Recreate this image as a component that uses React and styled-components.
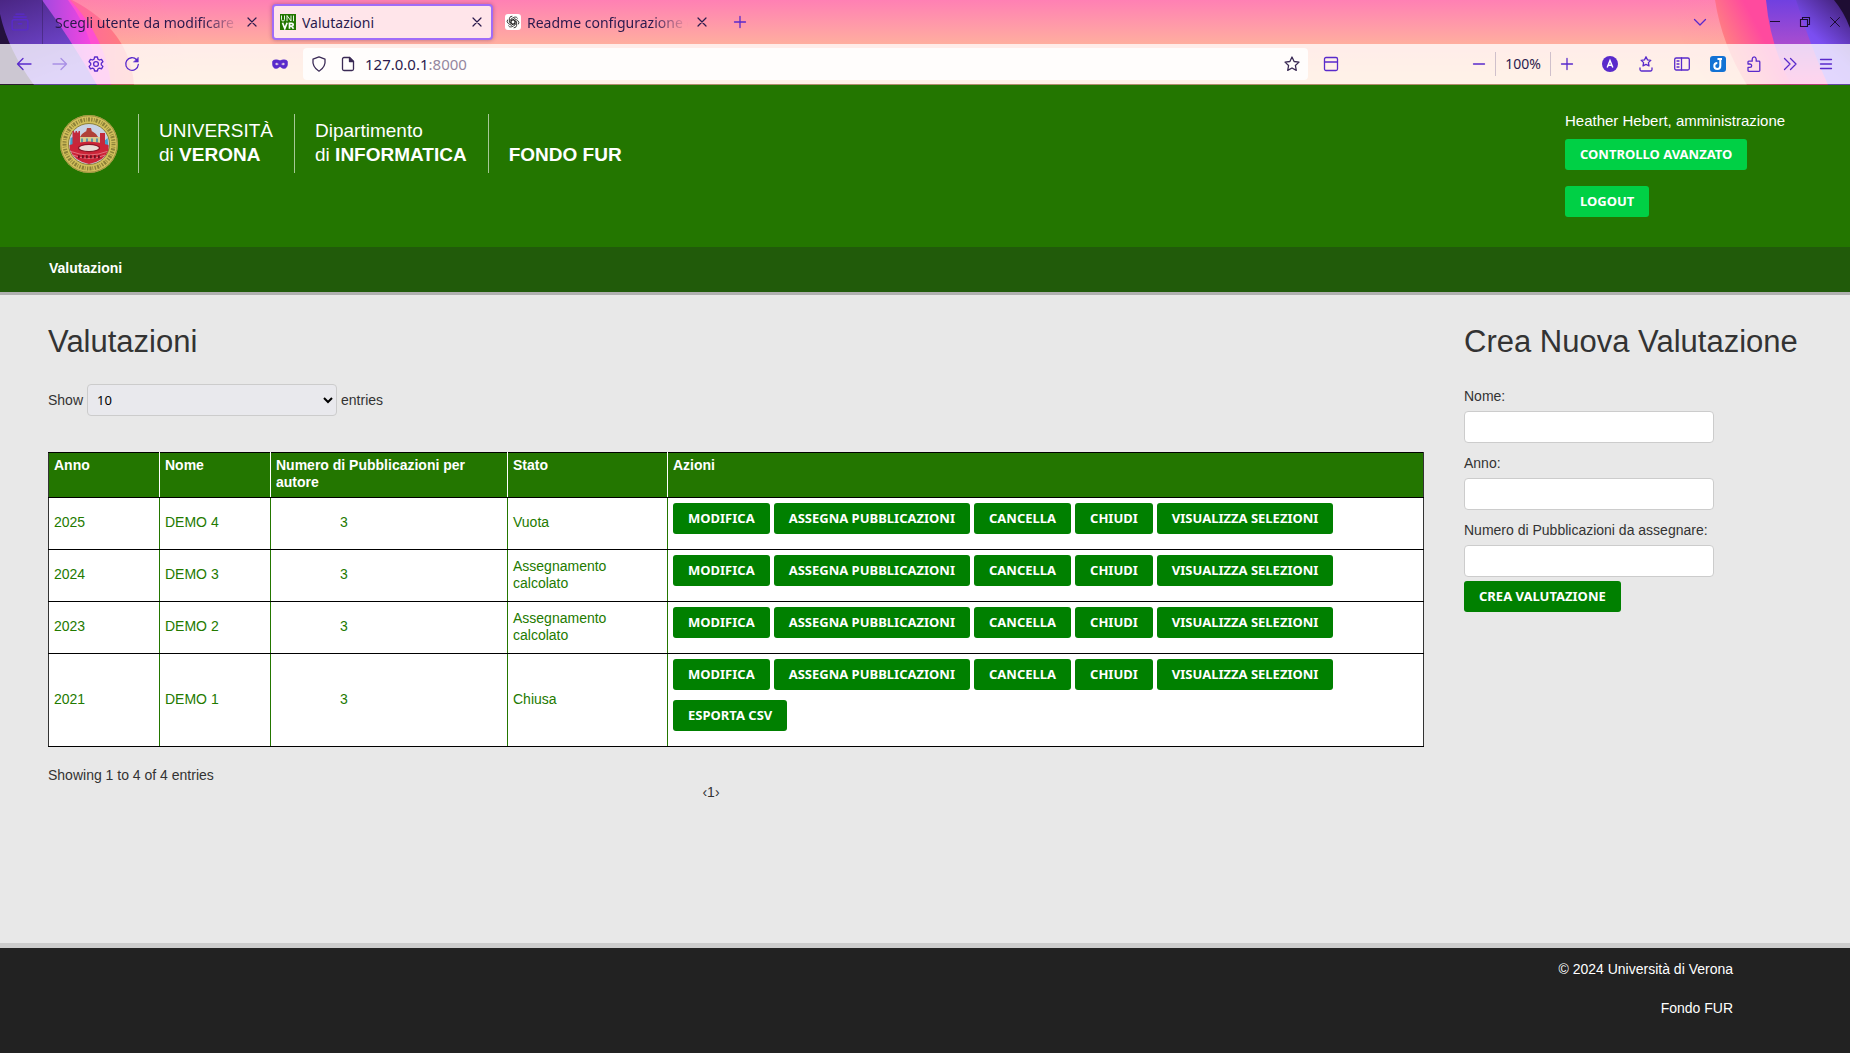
import React from "react";
import styled, { createGlobalStyle } from "styled-components";

const GlobalStyle = createGlobalStyle`
  *, *::before, *::after { box-sizing: border-box; }
  body {
    margin: 0;
    background: #e8e8e8;
    color: #333;
    font: 14px/20px "Liberation Sans", Arial, sans-serif;
  }
`;

const UI_FONT = '"Noto Sans", "Open Sans", sans-serif';

const Page = styled.div`
  display: flex;
  flex-direction: column;
  min-height: 100vh;
`;

/* ---------- browser chrome ---------- */

const Chrome = styled.div`
  position: relative;
  isolation: isolate;
  height: 85px;
  background: linear-gradient(#ff80b4 0, #ffae9f 44px, #ffc89a 85px);
  font-family: ${UI_FONT};
  color: #2b1a4d;
`;

const Artwork = styled.svg`
  position: absolute;
  top: 0;
  ${(p) => (p.$side === "left" ? "left: 0;" : "right: 0;")}
  z-index: -1;
  width: 240px;
  height: 85px;
`;

const TabBar = styled.div`
  display: flex;
  align-items: center;
  height: 44px;
`;

const ToolBar = styled.div`
  display: flex;
  align-items: center;
  height: 40px;
  padding: 0 6px;
  background: rgba(255, 255, 255, 0.77);
`;

const ToolBarEdge = styled.div`
  height: 1px;
  background: rgba(60, 50, 40, 0.4);
`;

const IconButton = styled.button`
  display: flex;
  flex: none;
  align-items: center;
  justify-content: center;
  width: ${(p) => p.$width || 36}px;
  height: 32px;
  padding: 0;
  border: 0;
  background: none;
  color: ${(p) => p.$color || "#592acb"};
  opacity: ${(p) => (p.disabled ? 0.4 : 1)};
`;

const FirefoxView = styled.div`
  display: flex;
  align-items: center;
  align-self: stretch;
  padding: 0 4px 0 2px;
  border-right: 1px solid rgba(43, 26, 77, 0.4);
`;

const Tab = styled.div`
  display: flex;
  align-items: center;
  width: ${(p) => (p.$wide ? 229 : 221)}px;
  height: 36px;
  padding: ${(p) => (p.$wide ? "0 6px 0 10px" : "0 0 0 6px")};
  border: 2px solid ${(p) => (p.$active ? "#a06cf8" : "transparent")};
  border-radius: 4px;
  background: ${(p) => (p.$active ? "#ffe5ea" : "transparent")};
  box-shadow: ${(p) => (p.$active ? "0 0 4px rgba(80, 20, 80, 0.4)" : "none")};
`;

const TabTitle = styled.span`
  flex: 1;
  margin-left: ${(p) => (p.$icon ? 6 : 0)}px;
  padding-top: 2px;
  overflow: hidden;
  white-space: nowrap;
  font-size: 14px;
  ${(p) => p.$fade && "mask-image: linear-gradient(to left, transparent 0, #000 36px);"}
`;

const Favicon = styled.svg`
  flex: none;
  width: 16px;
  height: 16px;
`;

const Spacer = styled.div`
  flex: ${(p) => (p.$width ? "none" : 1)};
  width: ${(p) => (p.$width ? `${p.$width}px` : "auto")};
`;

const AddressBar = styled.div`
  display: flex;
  flex: 1;
  align-items: center;
  height: 32px;
  border-radius: 4px;
  background: rgba(255, 255, 255, 0.85);
`;

const Address = styled.input`
  field-sizing: content;
  margin-left: 5px;
  padding: 0;
  border: 0;
  outline: 0;
  background: none;
  color: #2b1a4d;
  font: 15px/20px ${UI_FONT};
`;

const Port = styled.span`
  flex: 1;
  color: #94869f;
  font-size: 15px;
`;

const ZoomLevel = styled.span`
  padding: 2px 9px;
  border: solid #cfc0cb;
  border-width: 0 1px;
  font-size: 14px;
`;

const Glyph = ({ size = 16, w = 1.3, children, ...rest }) => (
  <svg width={size} height={size} viewBox="0 0 16 16" fill="none" stroke="currentColor"
    strokeWidth={w} strokeLinecap="round" strokeLinejoin="round" aria-hidden="true" {...rest}>
    {children}
  </svg>
);

const CloseGlyph = () => (
  <Glyph w={1.2}><path d="M4 4l8 8M12 4l-8 8" /></Glyph>
);

function LeftArtwork() {
  return (
    <Artwork $side="left" viewBox="0 0 240 85" aria-hidden="true">
      <defs>
        <linearGradient id="la" x1="0" x2="1"><stop offset="0" stopColor="#ff9a6c" /><stop offset="1" stopColor="#ff8aa4" stopOpacity="0" /></linearGradient>
        <linearGradient id="lb" x1="0" x2="1"><stop offset="0" stopColor="#ff45d5" /><stop offset="1" stopColor="#ff8078" /></linearGradient>
        <linearGradient id="lc" x1="0.2" x2="1"><stop offset="0" stopColor="#7a4be0" /><stop offset="1" stopColor="#ff45e0" /></linearGradient>
        <linearGradient id="ld" x1="0" x2="0.4" y2="1"><stop offset="0" stopColor="#4a2684" /><stop offset="1" stopColor="#7c50e6" /></linearGradient>
      </defs>
      <path d="M0 0H160Q185 40 190 85H0Z" fill="url(#la)" opacity="0.35" />
      <path d="M0 0H72Q130 30 134 85H0Z" fill="url(#lb)" />
      <path d="M0 0H70Q106 38 111 85H0Z" fill="#ff4fd0" />
      <path d="M0 0H68Q98 40 96 85H0Z" fill="url(#lc)" />
      <path d="M0 0H42Q70 38 97 85H0Z" fill="url(#ld)" />
      <path d="M0 14Q8 50 34 85H0Z" fill="#24113c" />
    </Artwork>
  );
}

function RightArtwork() {
  return (
    <Artwork $side="right" viewBox="0 0 240 85" aria-hidden="true">
      <defs>
        <linearGradient id="ra" x1="0" x2="1"><stop offset="0" stopColor="#ff8aa4" stopOpacity="0" /><stop offset="1" stopColor="#ff8a90" /></linearGradient>
        <linearGradient id="rb" gradientUnits="userSpaceOnUse" x1="106" y1="40" x2="144" y2="20"><stop offset="0" stopColor="#ff8a7c" /><stop offset="1" stopColor="#ff4a9e" /></linearGradient>
        <linearGradient id="rc" x1="0" x2="0" y2="1"><stop offset="0" stopColor="#7040e0" /><stop offset="0.5" stopColor="#a64cd0" /><stop offset="1" stopColor="#ff48b0" /></linearGradient>
        <linearGradient id="rd" x1="1" x2="0.4" y2="1"><stop offset="0" stopColor="#3a1a68" /><stop offset="0.6" stopColor="#7a4ef0" /><stop offset="1" stopColor="#8858ff" /></linearGradient>
      </defs>
      <path d="M60 0H240V85H100Q70 50 60 0Z" fill="url(#ra)" opacity="0.4" />
      <path d="M105 0H240V85H137Q112 45 105 0Z" fill="url(#rb)" />
      <path d="M156 0H240V85H181Q160 45 156 0Z" fill="url(#rc)" />
      <path d="M186 0H240V85H218Q200 45 186 0Z" fill="url(#rd)" />
      <path d="M224 0H240V28Q234 12 224 0Z" fill="#1e0d33" />
    </Artwork>
  );
}

function BrowserChrome() {
  return (
    <Chrome>
      <LeftArtwork />
      <RightArtwork />
      <TabBar>
        <FirefoxView>
          <IconButton aria-label="Firefox View">
            <Glyph size={18}><rect x="1" y="6" width="14" height="9" rx="1.5" /><path d="M2.500 3.500h11M4.500 1h7M6.500 9.500h3" /></Glyph>
          </IconButton>
        </FirefoxView>
        <Tab $wide>
          <TabTitle $fade>Scegli utente da modificare |</TabTitle>
          <IconButton $width={24} $color="#2b1a4d" aria-label="Close tab"><CloseGlyph /></IconButton>
        </Tab>
        <Tab $active>
          <Favicon viewBox="0 0 16 16">
            <rect width="16" height="16" fill="#237600" />
            <g fill="none" stroke="#fff" strokeWidth="0.9">
              <path d="M1.500 1.500v4q0 1.500 1.500 1.500t1.500-1.500v-4M7 7.200V1.500l4 5.500V1.500M13.500 1.500v5.700" />
            </g>
            <path d="M2.500 8.800l2.300 5.700 2.300-5.700M9.500 14.700V9.300h2.200q1.500 0 1.500 1.400t-1.500 1.400H9.500M11.500 12.100l2 2.600" fill="none" stroke="#fff" strokeWidth="1.700" />
          </Favicon>
          <TabTitle $icon>Valutazioni</TabTitle>
          <IconButton $width={28} $color="#2b1a4d" aria-label="Close tab"><CloseGlyph /></IconButton>
        </Tab>
        <Spacer $width={4} />
        <Tab>
          <Favicon viewBox="0 0 16 16">
            <rect width="16" height="16" rx="3" fill="#fff" />
            <g fill="none" stroke="#222" strokeWidth="0.8">
              {[0, 60, 120, 180, 240, 300].map((a) => (
                <path key={a} transform={`rotate(${a} 8 8)`} d="M6 9.100V5L9 3.200Q11.500 2.200 12.700 4.500M8 5.700l3.400 2" />
              ))}
            </g>
          </Favicon>
          <TabTitle $icon $fade>Readme configurazione e</TabTitle>
          <IconButton $width={28} $color="#2b1a4d" aria-label="Close tab"><CloseGlyph /></IconButton>
        </Tab>
        <Spacer $width={4} />
        <IconButton aria-label="New tab">
          <Glyph><path d="M8 2.500v11M2.500 8h11" /></Glyph>
        </IconButton>
        <Spacer />
        <IconButton $width={60} aria-label="List all tabs">
          <Glyph><path d="M2.500 5.500L8 11l5.500-5.500" /></Glyph>
        </IconButton>
        <Spacer $width={30} />
        <IconButton $width={30} $color="#1b0b30" aria-label="Minimize">
          <Glyph w={1} strokeLinecap="butt"><path d="M3 7.500h10" /></Glyph>
        </IconButton>
        <IconButton $width={30} $color="#1b0b30" aria-label="Restore">
          <Glyph w={1.100} strokeLinejoin="miter"><path d="M3.500 5.500h7v7h-7zM5.500 5.500v-2h7v7h-2" /></Glyph>
        </IconButton>
        <IconButton $width={30} $color="#1b0b30" aria-label="Close window">
          <Glyph w={1}><path d="M3.500 3.500l9 9M12.500 3.500l-9 9" /></Glyph>
        </IconButton>
      </TabBar>
      <ToolBar>
        <IconButton aria-label="Back">
          <Glyph><path d="M15 8H1.500M7 2.500L1.500 8 7 13.500" /></Glyph>
        </IconButton>
        <IconButton disabled aria-label="Forward">
          <Glyph><path d="M1 8h13.500M9 2.500L14.500 8 9 13.500" /></Glyph>
        </IconButton>
        <IconButton aria-label="Settings">
          <Glyph>
            <path d="M6.600 1h2.800l.5 2.100 1.500.9 2.100-.7 1.400 2.400-1.600 1.500v1.700l1.600 1.500-1.400 2.400-2.100-.7-1.500.9L9.400 15H6.600l-.5-2-1.500-.9-2.100.7-1.400-2.400 1.600-1.500V7.200L1.100 5.700l1.400-2.400 2.100.7 1.500-.9z" />
            <circle cx="8" cy="8" r="2.400" />
          </Glyph>
        </IconButton>
        <IconButton aria-label="Reload">
          <Glyph><path d="M14.300 8.500A6.300 6.300 0 1 1 12.600 3.700" /><path d="M14.300 1.500v4.600H9.700z" fill="currentColor" strokeWidth="0.500" /></Glyph>
        </IconButton>
        <Spacer $width={112} />
        <IconButton aria-label="Private extension">
          <Glyph>
            <path fillRule="evenodd" fill="currentColor" strokeWidth="0.500" d="M8 4.800C5.500 3.400 0.300 3 0.300 6.500c0 4 1.500 6 3.700 6 2.300 0 3-1.800 4-1.800s1.700 1.800 4 1.800c2.200 0 3.700-2 3.700-6C15.700 3 10.500 3.400 8 4.800zM2.800 8q2-2.600 4 .2-2 2.200-4-.2zM13.200 8q-2-2.600-4 .2 2 2.200 4-.2z" />
          </Glyph>
        </IconButton>
        <Spacer $width={5} />
        <AddressBar>
          <IconButton $width={32} $color="#3a2a55" aria-label="Tracking protection">
            <Glyph><path d="M8 .9l6 2.300q1 8-6 12Q1 11.200 2 3.200z" /></Glyph>
          </IconButton>
          <IconButton $width={25} $color="#3a2a55" aria-label="Site information">
            <Glyph><path d="M9.500 1.500H4A1.500 1.500 0 0 0 2.500 3v10A1.500 1.500 0 0 0 4 14.500h8a1.500 1.500 0 0 0 1.500-1.500V5.500z" /><path d="M9.500 1.500v4h4z" fill="currentColor" /></Glyph>
          </IconButton>
          <Address aria-label="Address" defaultValue="127.0.0.1" />
          <Port>:8000</Port>
          <IconButton $width={32} $color="#3a2a55" aria-label="Bookmark this page">
            <Glyph><path d="M8 1l2.100 4.500 4.900.6-3.600 3.400.9 4.900L8 12l-4.300 2.400.9-4.900L1 6.100l4.900-.6z" /></Glyph>
          </IconButton>
        </AddressBar>
        <Spacer $width={5} />
        <IconButton aria-label="Reader">
          <Glyph><rect x="1.500" y="1.500" width="13" height="13" rx="1.500" /><path d="M1.500 6h13" /></Glyph>
        </IconButton>
        <Spacer $width={114} />
        <IconButton $width={32} aria-label="Zoom out">
          <Glyph><path d="M2.500 8h11" /></Glyph>
        </IconButton>
        <ZoomLevel>100%</ZoomLevel>
        <IconButton $width={32} aria-label="Zoom in">
          <Glyph><path d="M8 2.500v11M2.500 8h11" /></Glyph>
        </IconButton>
        <Spacer $width={9} />
        <IconButton aria-label="Account">
          <svg width="16" height="16" viewBox="0 0 16 16" aria-hidden="true">
            <circle cx="8" cy="8" r="8" fill="#592acb" />
            <path d="M5.200 11.500L8 4.500l2.800 7M6.200 9.300h3.600" fill="none" stroke="#fff" strokeWidth="1.500" />
          </svg>
        </IconButton>
        <IconButton aria-label="Bookmarks menu">
          <Glyph><path d="M8 .8l1.500 3.100 3.300.4-2.400 2.300.6 3.300L8 8.400 5 9.900l.6-3.300L3.200 4.300l3.300-.4zM2 12v1.500A1.500 1.500 0 0 0 3.500 15h9a1.500 1.500 0 0 0 1.500-1.500V12" /></Glyph>
        </IconButton>
        <IconButton aria-label="Sidebars">
          <Glyph><rect x="0.700" y="2" width="14.600" height="12" rx="1.500" /><path d="M7.500 2v12M3 5h2M3 8h2M3 11h2" /></Glyph>
        </IconButton>
        <IconButton aria-label="Web clipper">
          <svg width="16" height="16" viewBox="0 0 16 16" aria-hidden="true">
            <rect width="16" height="16" rx="3" fill="#1272d4" />
            <path d="M7.500 3h4.500M10.300 3v7a3 3 0 1 1-3-3" fill="none" stroke="#fff" strokeWidth="2" />
          </svg>
        </IconButton>
        <IconButton aria-label="Extensions">
          <Glyph><path d="M2 11.400V14.500q0 .8.800.8H13q.8 0 .8-.8V6q0-.8-.8-.8h-2.800V3q-.3-2.100-2-2.100T6.200 3v2.200H2.800Q2 5.200 2 6v2h1.800q1.900.2 1.900 1.700T3.800 11.400z" /></Glyph>
        </IconButton>
        <IconButton aria-label="More tools">
          <Glyph><path d="M2.500 2.500L8 8l-5.500 5.500M8.500 2.500L14 8l-5.500 5.500" /></Glyph>
        </IconButton>
        <IconButton aria-label="Application menu">
          <Glyph><path d="M2.500 3.500h11M2.500 8h11M2.500 12.500h11" /></Glyph>
        </IconButton>
      </ToolBar>
      <ToolBarEdge />
    </Chrome>
  );
}

/* ---------- site header ---------- */

const Header = styled.header`
  display: flex;
  justify-content: space-between;
  min-height: 162px;
  padding: 29px 0 29px 60px;
  background: #237600;
  color: #fff;
`;

const Brand = styled.div`
  display: flex;
  align-items: flex-start;
`;

const Crest = styled.svg`
  width: 58px;
  height: 60px;
  margin-right: 20px;
`;

const BrandPart = styled.div`
  display: flex;
  flex-direction: column;
  justify-content: flex-end;
  height: 59px;
  padding: 0 21px 6px 20px;
  border-left: 1px solid #a5c896;
  font-size: 19px;
  line-height: 24px;
  white-space: nowrap;
`;

const UserBox = styled.div`
  display: flex;
  flex-direction: column;
  align-items: flex-start;
  width: 285px;
`;

const UserName = styled.p`
  margin: -3px 0 8px;
  font-size: 15px;
`;

const Button = styled.button`
  height: 31px;
  margin: 0 0 ${(p) => p.$gap || 0}px;
  padding: 0 15px;
  border: 0;
  border-radius: 3px;
  background: ${(p) => (p.$bright ? "#00d045" : "#008000")};
  color: #fff;
  font: bold 13px/31px ${UI_FONT};
  text-transform: uppercase;
  white-space: nowrap;
  cursor: pointer;
`;

const Nav = styled.nav`
  height: 48px;
  padding: 11px 49px;
  border-bottom: 3px solid #b0b0b0;
  background: #215b0a;
`;

const NavLink = styled.a`
  color: #fff;
  font-weight: bold;
  text-decoration: none;
`;

function UniversityCrest() {
  const windows = [18, 22, 26, 30, 34, 38];
  return (
    <Crest viewBox="0 0 58 60" role="img" aria-label="Università degli Studi di Verona">
      <circle cx="29" cy="30" r="29" fill="#d2c05c" />
      <circle cx="29" cy="30" r="28.300" fill="none" stroke="#8d8138" strokeWidth="0.800" />
      <circle cx="29" cy="30" r="24.500" fill="none" stroke="#5e5620" strokeWidth="4" strokeDasharray="1.300 1.500 0.700 1 2 1.300" opacity="0.600" />
      <circle cx="29" cy="30" r="20.500" fill="#c8d2e4" stroke="#8d8138" strokeWidth="1" />
      <path d="M10.500 24q5-3 9 0t9-1 10 1 9 0l1 9H10z" fill="#3fa0cc" />
      <path d="M22 20q7-7 14 0l2 3H20zM27 14h4l1 4h-6z" fill="#b04038" />
      <path d="M18 23h22v6H18z" fill="#d8ca90" />
      <path d="M21 24.500h2v4h-2zM26 24.500h2v4h-2zM31 24.500h2v4h-2zM36 24.500h2v4h-2z" fill="#5c9aa8" />
      <path d="M12.500 17h1.500v1.500h1.500V17H17v1.500h1.500V17H20v15h-7.500zM40 19h5v13h-5z" fill="#c22a3c" />
      <path d="M9.500 31q19-7 39 0v5q-4 11-19.500 14Q14 47 10 36z" fill="#cc2438" />
      <ellipse cx="29" cy="34" rx="10.500" ry="3.600" fill="#e9dcd6" stroke="#8c1526" strokeWidth="1.200" />
      <path d="M11 37.500q18 7 36 0M13 41q16 7 32 0" fill="none" stroke="#e8939a" strokeWidth="0.700" />
      {windows.map((x) => (
        <rect key={x} x={x} y="41" width="1.800" height="3.500" rx="0.900" fill="#6e0f1e" />
      ))}
    </Crest>
  );
}

/* ---------- main content ---------- */

const Main = styled.main`
  display: flex;
  flex: 1;
  align-items: flex-start;
  gap: 40px;
  padding: 27px 48px 40px;
`;

const Listing = styled.section`
  flex: 1;
  min-width: 0;
`;

const Creation = styled.section`
  flex: none;
  width: 338px;
`;

const Title = styled.h1`
  margin: 0 0 ${(p) => p.$gap}px;
  font-size: 31px;
  line-height: 40px;
  font-weight: normal;
  white-space: nowrap;
`;

const LengthLabel = styled.label`
  display: flex;
  align-items: center;
  gap: 4px;
  margin-bottom: 36px;
`;

const LengthSelect = styled.select`
  width: 250px;
  height: 32px;
  padding: 0 5px;
  border: 1px solid #ccc;
  border-radius: 4px;
  background-color: #e9e9ed;
  color: #000;
  font: 13px/20px ${UI_FONT};
`;

const Table = styled.table`
  width: 100%;
  border: 1px solid #333;
  border-collapse: collapse;
  table-layout: fixed;
  background: #fff;
`;

const Col = styled.col`
  width: ${(p) => (p.$width ? `${p.$width}px` : "auto")};
`;

const HeadCell = styled.th`
  padding: 4px 5px 6px;
  border: 1px solid #fff;
  border-top-color: #000;
  border-bottom-color: #000;
  background: #237600;
  color: #fff;
  line-height: 17px;
  text-align: left;
  vertical-align: top;
  &:first-child { border-left-color: #333; }
  &:last-child { border-right-color: #333; }
`;

const Cell = styled.td`
  padding: 5px 5px ${(p) => (p.$actions ? 5 : 7)}px ${(p) => (p.$indent ? 69 : 5)}px;
  border: 1px solid #237600;
  border-top-color: #000;
  border-bottom-color: #000;
  color: #237a00;
  line-height: 17px;
  &:first-child { border-left-color: #333; }
  &:last-child { border-right-color: #333; }
`;

const Actions = styled.div`
  display: flex;
  flex-wrap: wrap;
  gap: 10px 4px;
  padding-bottom: 10px;
`;

const Info = styled.p`
  margin: 18px 0 0;
`;

const Pager = styled.nav`
  padding-right: 50px;
  line-height: 14px;
  text-align: center;
`;

const Field = styled.label`
  display: block;
  margin-bottom: ${(p) => (p.$last ? 4 : 10)}px;
`;

const TextInput = styled.input`
  display: block;
  width: 250px;
  height: 32px;
  margin-top: 5px;
  padding: 4px 6px;
  border: 1px solid #ccc;
  border-radius: 4px;
  background: #fff;
  font: inherit;
`;

const Footer = styled.footer`
  display: flex;
  flex-direction: column;
  gap: 19px;
  padding: 11px 117px 35px;
  border-top: 5px solid #ccc;
  background: #222;
  color: #fff;
  text-align: right;
`;

const BASE_ACTIONS = ["Modifica", "Assegna pubblicazioni", "Cancella", "Chiudi", "Visualizza selezioni"];

const ROWS = [
  { year: 2025, name: "DEMO 4", count: 3, state: "Vuota", actions: BASE_ACTIONS },
  { year: 2024, name: "DEMO 3", count: 3, state: "Assegnamento calcolato", actions: BASE_ACTIONS },
  { year: 2023, name: "DEMO 2", count: 3, state: "Assegnamento calcolato", actions: BASE_ACTIONS },
  { year: 2021, name: "DEMO 1", count: 3, state: "Chiusa", actions: [...BASE_ACTIONS, "Esporta CSV"] },
];

const COLUMNS = [
  { label: "Anno", width: 111 },
  { label: "Nome", width: 111 },
  { label: "Numero di Pubblicazioni per autore", width: 237 },
  { label: "Stato", width: 160 },
  { label: "Azioni" },
];

export default function App() {
  return (
    <Page>
      <GlobalStyle />
      <BrowserChrome />
      <Header>
        <Brand>
          <UniversityCrest />
          <BrandPart><span>UNIVERSITÀ</span><span>di <b>VERONA</b></span></BrandPart>
          <BrandPart><span>Dipartimento</span><span>di <b>INFORMATICA</b></span></BrandPart>
          <BrandPart><b>FONDO FUR</b></BrandPart>
        </Brand>
        <UserBox>
          <UserName>Heather Hebert, amministrazione</UserName>
          <Button $bright $gap={16}>Controllo avanzato</Button>
          <Button $bright>Logout</Button>
        </UserBox>
      </Header>
      <Nav><NavLink href="#valutazioni">Valutazioni</NavLink></Nav>
      <Main>
        <Listing id="valutazioni">
          <Title $gap={22}>Valutazioni</Title>
          <LengthLabel>
            Show
            <LengthSelect defaultValue="10">
              <option>10</option>
              <option>25</option>
              <option>50</option>
              <option>100</option>
            </LengthSelect>
            entries
          </LengthLabel>
          <Table>
            <colgroup>
              {COLUMNS.map((c) => <Col key={c.label} $width={c.width} />)}
            </colgroup>
            <thead>
              <tr>{COLUMNS.map((c) => <HeadCell key={c.label} scope="col">{c.label}</HeadCell>)}</tr>
            </thead>
            <tbody>
              {ROWS.map((r) => (
                <tr key={r.year}>
                  <Cell>{r.year}</Cell>
                  <Cell>{r.name}</Cell>
                  <Cell $indent>{r.count}</Cell>
                  <Cell>{r.state}</Cell>
                  <Cell $actions>
                    <Actions>
                      {r.actions.map((a) => <Button key={a}>{a}</Button>)}
                    </Actions>
                  </Cell>
                </tr>
              ))}
            </tbody>
          </Table>
          <Info>Showing 1 to 4 of 4 entries</Info>
          <Pager aria-label="Pagine">‹1›</Pager>
        </Listing>
        <Creation>
          <Title $gap={24}>Crea Nuova Valutazione</Title>
          <Field>Nome:<TextInput name="nome" /></Field>
          <Field>Anno:<TextInput name="anno" /></Field>
          <Field $last>Numero di Pubblicazioni da assegnare:<TextInput name="numero" /></Field>
          <Button>Crea valutazione</Button>
        </Creation>
      </Main>
      <Footer>
        <span>© 2024 Università di Verona</span>
        <span>Fondo FUR</span>
      </Footer>
    </Page>
  );
}
